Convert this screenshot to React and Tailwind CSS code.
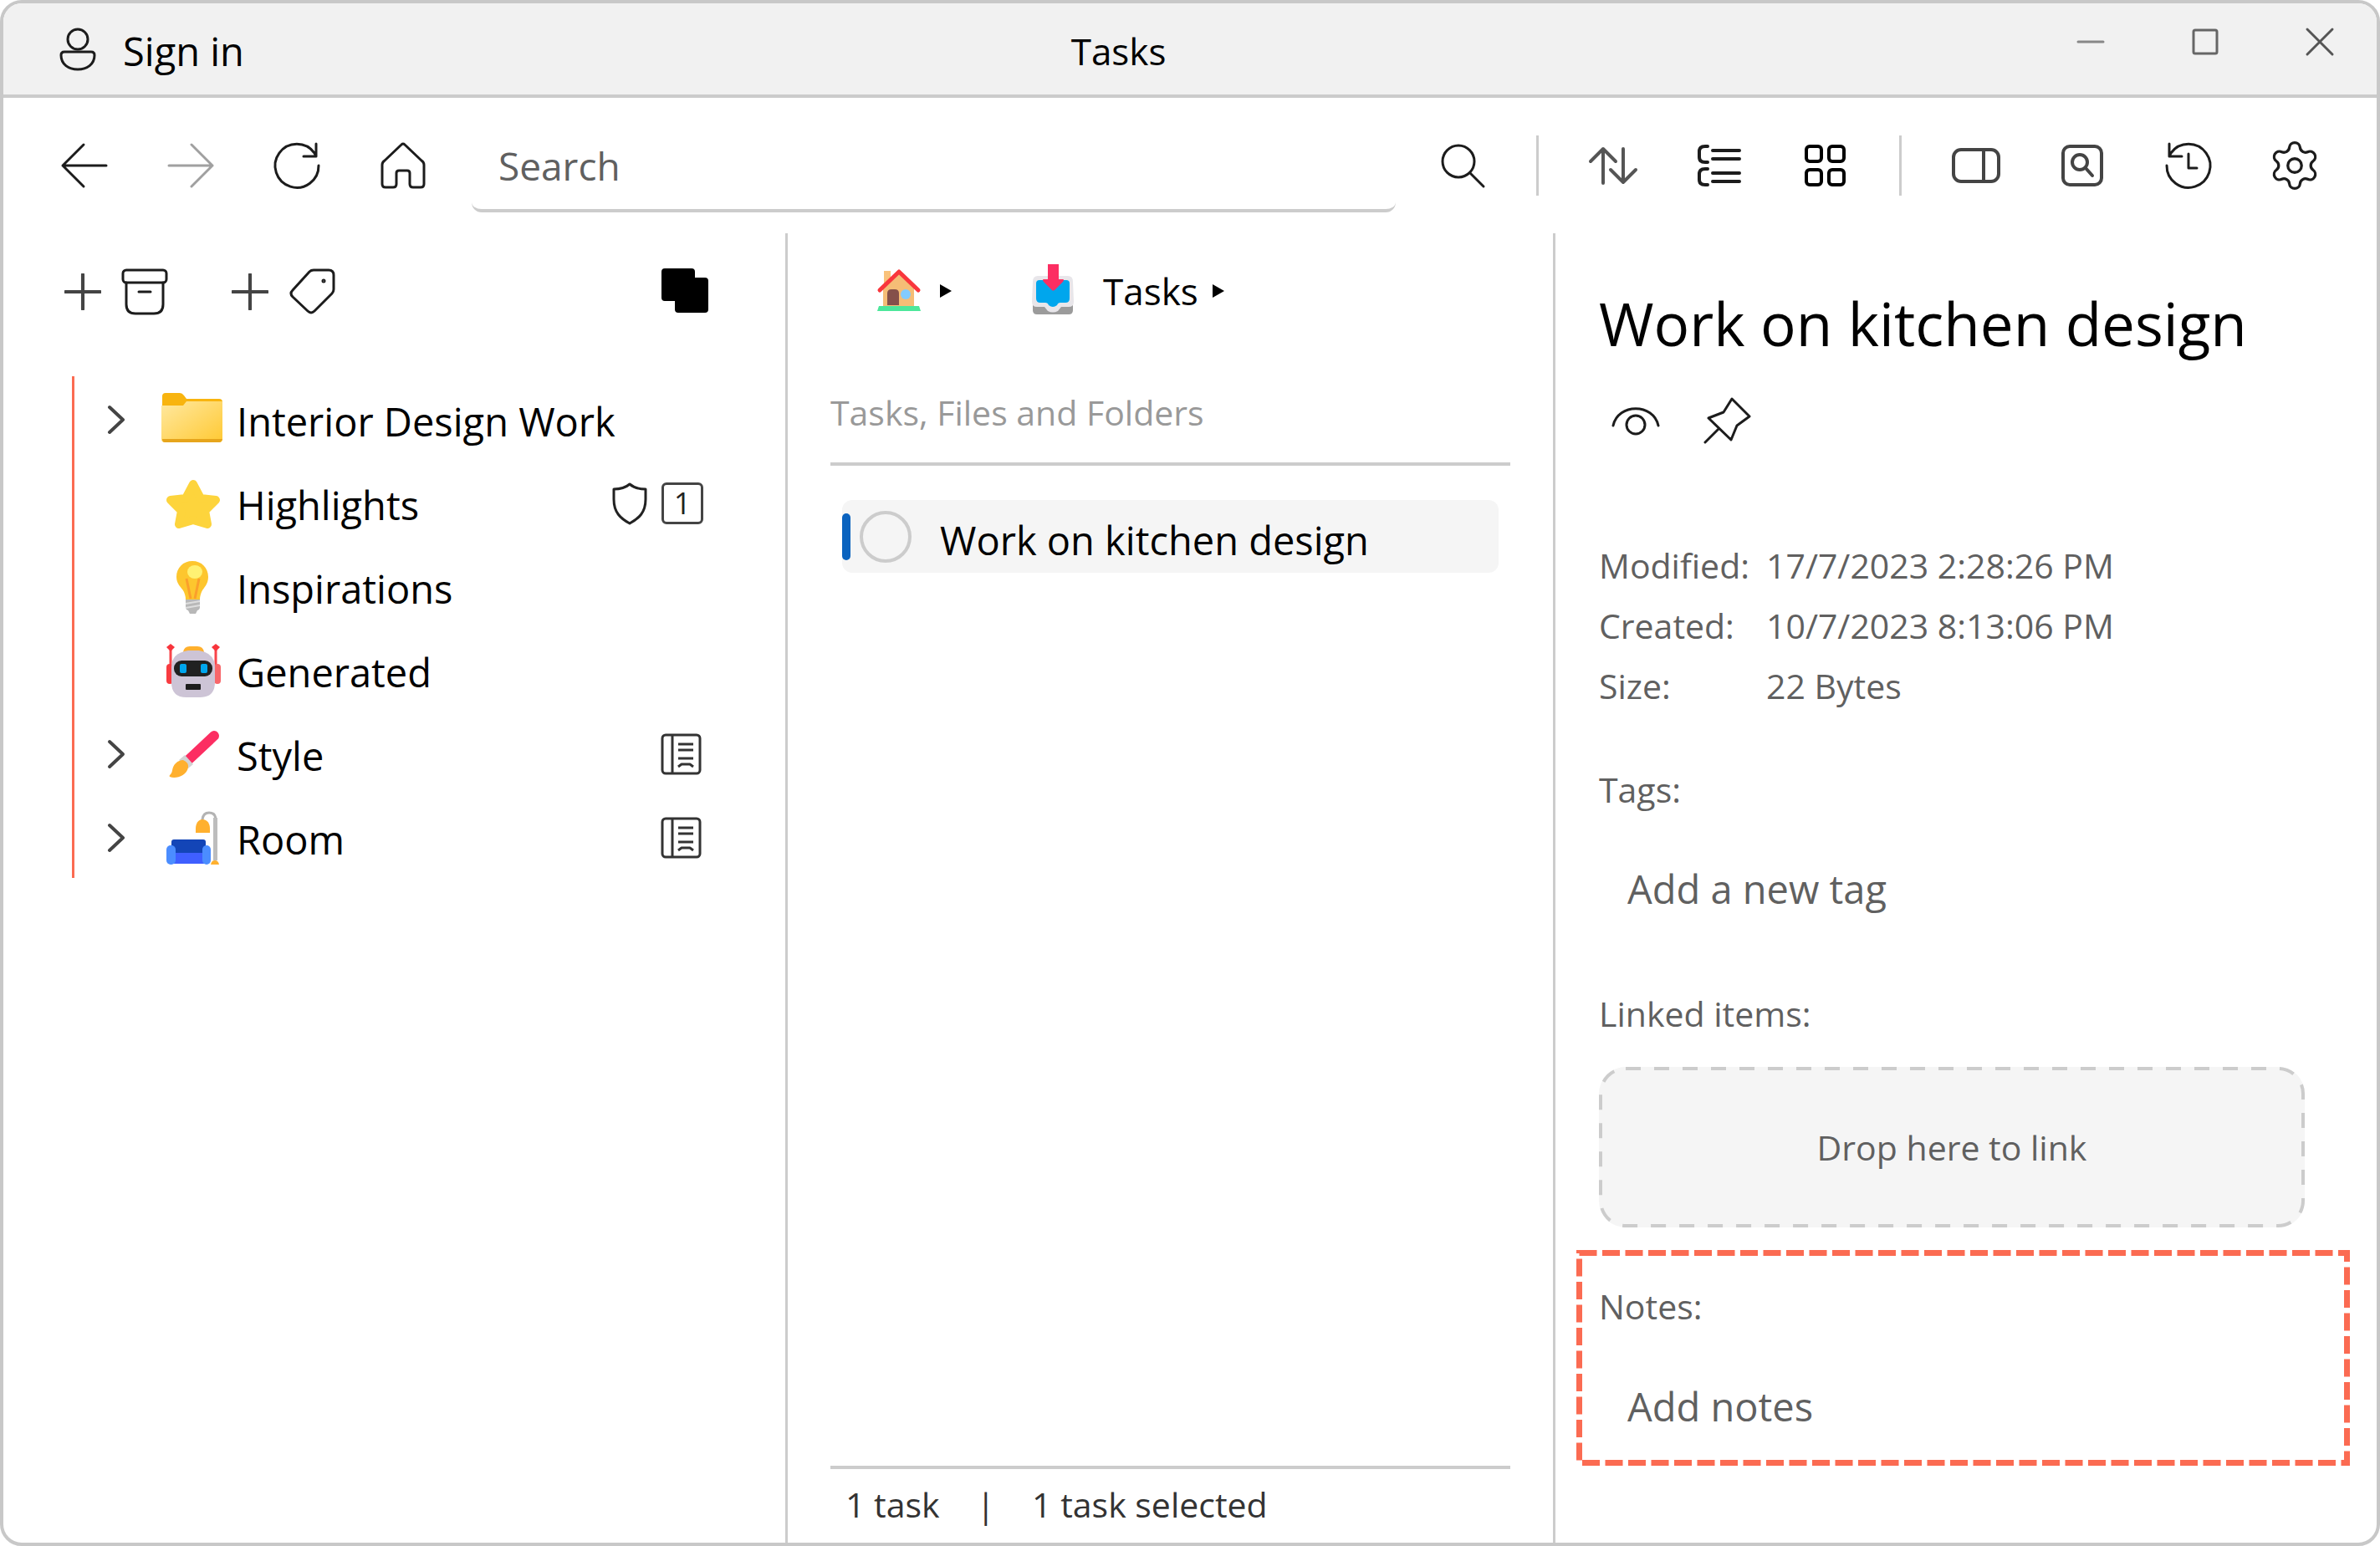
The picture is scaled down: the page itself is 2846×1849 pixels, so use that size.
import React from "react";
import { Settings } from "lucide-react";

function Icon({ children, className = "size-16", width = 3, color = "#1c1c1c" }) {
  return (
    <svg
      viewBox="0 0 64 64"
      className={`shrink-0 ${className}`}
      fill="none"
      stroke={color}
      strokeWidth={width}
      strokeLinecap="round"
      strokeLinejoin="round"
      aria-hidden="true"
    >
      {children}
    </svg>
  );
}

function ToolButton({ label, children, disabled }) {
  return (
    <button type="button" aria-label={label} disabled={disabled} className="flex h-20 w-[127px] shrink-0 items-center justify-center">
      {children}
    </button>
  );
}

function Divider() {
  return <div className="mx-[25px] h-[72px] w-[3px] shrink-0 bg-[#cccccc]" />;
}

function Triangle() {
  return (
    <svg viewBox="0 0 16 18" className="h-[18px] w-4 shrink-0" aria-hidden="true">
      <path d="M1 1L15 9L1 17Z" fill="#000" />
    </svg>
  );
}

function Chevron() {
  return (
    <svg viewBox="0 0 36 40" className="h-10 w-9" fill="none" stroke="#444" strokeWidth="4" strokeLinecap="round" strokeLinejoin="round" aria-hidden="true">
      <path d="M10 7L26 22L10 37" />
    </svg>
  );
}

function Emoji({ children }) {
  return (
    <svg viewBox="0 0 80 80" className="size-20 shrink-0" aria-hidden="true">
      {children}
    </svg>
  );
}

function FolderPic() {
  return (
    <Emoji>
      <defs>
        <linearGradient id="folder" x1="0" y1="0" x2="1" y2="1">
          <stop offset="0" stopColor="#ffe8a0" />
          <stop offset="1" stopColor="#ffc933" />
        </linearGradient>
      </defs>
      <path d="M3 14q0-4 4-4h17q3 0 5 3l3 4h39q4 0 4 4v10H3z" fill="#f8b40f" />
      <path d="M2 25h26l4-5h43v45q0 4-4 4H6q-4 0-4-4z" fill="url(#folder)" />
      <path d="M3 65h72q-1 4-4 4H6q-3 0-3-4z" fill="#e6a51c" />
    </Emoji>
  );
}

function StarPic() {
  return (
    <Emoji>
      <path
        d="M40 19L49 36L67 38L54 51L57 67L40 62L23 67L26 51L13 38L31 36Z"
        fill="#fdd43c"
        stroke="#fdd43c"
        strokeWidth="10"
        strokeLinejoin="round"
      />
    </Emoji>
  );
}

function BulbPic() {
  return (
    <Emoji>
      <path d="M39 11c11 0 19 8 19 19 0 9-5 12-8 18-1 3-2 5-2 9H31c0-4-1-6-2-9-3-6-9-9-9-18 0-11 8-19 19-19z" fill="#fdc62e" />
      <path d="M32 32l5 24M47 32l-5 24" stroke="#fb9f2c" strokeWidth="3" fill="none" />
      <ellipse cx="42" cy="24" rx="9" ry="8" fill="#fff173" />
      <path d="M31 57h17v9q0 3-3 4l-2 4h-7l-2-4q-3-1-3-4z" fill="#b8b8b8" />
      <path d="M31 62l17-3M31 67l17-3" stroke="#dedede" strokeWidth="2" />
    </Emoji>
  );
}

function RobotPic() {
  return (
    <Emoji>
      <path d="M13 15v30M67 15v30" stroke="#f8454b" strokeWidth="3" />
      <path d="M13 10l5 4-5 5-5-5zM67 10l5 4-5 5-5-5z" fill="#f8353c" />
      <rect x="8" y="34" width="8" height="24" rx="4" fill="#f83b40" />
      <rect x="65" y="34" width="8" height="24" rx="4" fill="#f8666a" />
      <path d="M28 20q1-7 8-7h9q7 0 8 7z" fill="#ffb02e" />
      <path d="M34 18h13q19 3 19 20v18q0 18-18 18H32q-18 0-18-18V38q0-17 20-20z" fill="#cdc4d6" />
      <rect x="17" y="30" width="46" height="19" rx="9" fill="#212121" />
      <rect x="24" y="34" width="8" height="11" rx="2" fill="#00a6ed" />
      <rect x="49" y="34" width="8" height="11" rx="2" fill="#00a6ed" />
      <rect x="31" y="58" width="18" height="7" rx="1" fill="#1c1c1c" />
    </Emoji>
  );
}

function BrushPic() {
  return (
    <Emoji>
      <path d="M32 51L65 20" stroke="#fc2e62" strokeWidth="12" strokeLinecap="round" />
      <path d="M30 43l10 11-6 5-11-10z" fill="#d3d3d3" />
      <path d="M28 49q7 3 6 9c-2 10-15 14-22 11-1-1 0-2 1-3 3-3 1-8 6-13 3-3 6-4 9-4z" fill="#ffb02e" />
    </Emoji>
  );
}

function SofaPic() {
  return (
    <Emoji>
      <path d="M51 22V20q1-8 8-8 8 0 8 9" fill="none" stroke="#b3b3b3" strokeWidth="3" />
      <path d="M64 18h5v51h-5z" fill="#bdbdbd" />
      <path d="M51 20c6 0 9 5 9 11v5H43v-5c0-6 3-11 8-11z" fill="#ffb02e" />
      <rect x="14" y="44" width="41" height="22" rx="3" fill="#1345b7" />
      <rect x="12" y="60" width="45" height="13" fill="#3f5fff" />
      <rect x="8" y="51" width="11" height="23" rx="5" fill="#4b8dff" />
      <rect x="51" y="51" width="10" height="23" rx="5" fill="#4b8dff" />
      <path d="M61 74q1-5 5-5t5 5z" fill="#ffb02e" />
    </Emoji>
  );
}

function HousePic() {
  return (
    <svg viewBox="0 0 64 64" className="size-16 shrink-0" aria-hidden="true">
      <path d="M14 8h8v15h-8z" fill="#f9c27b" />
      <path d="M32 10L50 28v22H13V28z" fill="#f5bd76" />
      <path d="M9 31L32 9L55 31" fill="none" stroke="#f9363c" strokeWidth="5" strokeLinecap="round" strokeLinejoin="round" />
      <path d="M18 49V35q0-5 5-5h4q5 0 5 5v14z" fill="#85504a" />
      <circle cx="40" cy="36" r="6" fill="#83cbff" />
      <path d="M8 50h48l2 6H6z" fill="#4ce79a" />
    </svg>
  );
}

function InboxPic() {
  return (
    <svg viewBox="0 0 64 64" className="size-16 shrink-0" aria-hidden="true">
      <path d="M8 36h48v19q0 5-5 5H13q-5 0-5-5z" fill="#9b9b9b" />
      <path d="M14 14h36q6 0 6 7l1 24q0 6-6 6H42l-4 5q-6 3-12 0l-4-5H13q-6 0-6-6l1-24q0-7 6-7z" fill="#e8e6ea" />
      <path d="M16 19h32q4 0 4 4v18q0 5-5 5h-6q-3 0-4 3-5 4-10 0-1-3-4-3h-6q-5 0-5-5V23q0-4 4-4z" fill="#00a6ed" />
      <path d="M26 0h13v18h5q2 0 0 3L34 31q-2 1-3 0L21 21q-2-3 0-3h5z" fill="#fc2e62" />
    </svg>
  );
}

function BookIcon() {
  return (
    <svg viewBox="0 0 52 52" className="size-[52px]" fill="none" stroke="#333" strokeWidth="3" strokeLinejoin="round" aria-hidden="true">
      <rect x="3" y="3" width="45" height="46" rx="4" />
      <path d="M15 3v46M22 14h18M22 21h18M22 31h18M22 41l4-3h10l4 3" />
    </svg>
  );
}

const tree = [
  { label: "Interior Design Work", pic: FolderPic, expandable: true },
  { label: "Highlights", pic: StarPic, badge: "priority" },
  { label: "Inspirations", pic: BulbPic },
  { label: "Generated", pic: RobotPic },
  { label: "Style", pic: BrushPic, expandable: true, badge: "book" },
  { label: "Room", pic: SofaPic, expandable: true, badge: "book" },
];

function TreeRow({ item }) {
  const Pic = item.pic;
  return (
    <li className="flex h-[100px] items-center pl-8 pr-[98px]">
      <div className="flex w-9 shrink-0">
        {item.expandable && (
          <button type="button" aria-label={`Expand ${item.label}`}>
            <Chevron />
          </button>
        )}
      </div>
      <a href="#" className="ml-[34px] flex min-w-0 items-center gap-3">
        <Pic />
        <span className="truncate pt-2 leading-[70px]">{item.label}</span>
      </a>
      {item.badge === "priority" && (
        <div className="ml-auto flex items-center gap-3 pt-1">
          <svg viewBox="0 0 52 52" className="size-[52px]" fill="none" stroke="#222" strokeWidth="3" strokeLinejoin="round" aria-hidden="true">
            <path d="M26 3q7 6 19 6v12c0 16-8 23-19 29C15 44 7 37 7 21V9q12 0 19-6z" />
          </svg>
          <span className="flex size-[50px] items-center justify-center rounded-md border-3 border-[#444] text-[36px] leading-10 text-[#222]">1</span>
        </div>
      )}
      {item.badge === "book" && (
        <div className="ml-auto pt-1">
          <BookIcon />
        </div>
      )}
    </li>
  );
}

export default function App() {
  return (
    <div className="min-h-screen bg-white">
      <div className="flex min-h-screen flex-col overflow-hidden rounded-[26px] border-4 border-[#c8c8c8] bg-white font-['Open_Sans','Noto_Sans',sans-serif] text-[47px] text-black">
        <header className="grid h-[113px] grid-cols-[minmax(0,1277fr)_auto_minmax(0,1448fr)] items-center border-b-4 border-[#cbcbcb] bg-[#f1f1f1]">
          <button type="button" className="flex items-center gap-[22px] justify-self-start pl-[57px]">
            <Icon>
              <circle cx="32" cy="20" r="12" />
              <path d="M16 35h32q4 0 4 4c0 11-9 17-20 17S12 50 12 39q0-4 4-4z" />
            </Icon>
            <span className="pt-1 leading-[70px]">Sign in</span>
          </button>
          <h1 className="pt-1 text-[44px] leading-[70px]">Tasks</h1>
          <div className="flex h-[92px] items-center self-start justify-self-end">
            <button type="button" aria-label="Minimize" className="flex w-[137px] justify-center">
              <Icon color="#888"><path d="M17 32h30" /></Icon>
            </button>
            <button type="button" aria-label="Maximize" className="flex w-[137px] justify-center">
              <Icon color="#666"><rect x="18" y="18" width="28" height="28" rx="2" /></Icon>
            </button>
            <button type="button" aria-label="Close" className="flex w-[137px] justify-center">
              <Icon color="#555"><path d="M17 17L47 47M47 17L17 47" /></Icon>
            </button>
          </div>
        </header>

        <div className="flex h-[162px] items-center pl-[33px] pr-[35px]">
          <ToolButton label="Back">
            <Icon><path d="M58 32H6M31 7L6 32L31 57" /></Icon>
          </ToolButton>
          <ToolButton label="Forward" disabled>
            <Icon color="#a0a0a0"><path d="M6 32H58M33 7L58 32L33 57" /></Icon>
          </ToolButton>
          <ToolButton label="Refresh">
            <Icon><path d="M58 32A26 26 0 1 1 53 17L55 21M55 6V21H40" /></Icon>
          </ToolButton>
          <ToolButton label="Home">
            <Icon><path d="M30 7q2-2 4 0L54 26q3 2 3 5V54q0 4-4 4H44q-4 0-4-4V41q0-3-3-3H27q-3 0-3 3V54q0 4-4 4H11q-4 0-4-4V31q0-3 3-5z" /></Icon>
          </ToolButton>
          <input
            type="text"
            aria-label="Search"
            placeholder="Search"
            className="ml-[19px] mr-4 h-[112px] min-w-0 flex-1 rounded-b-xl border-b-4 border-[#cccccc] bg-transparent pl-8 pt-1 text-[46px] outline-none placeholder:text-[#606060]"
          />
          <ToolButton label="Run search">
            <Icon><circle cx="27" cy="27" r="19" /><path d="M41 41L57 57" /></Icon>
          </ToolButton>
          <Divider />
          <ToolButton label="Sort">
            <Icon width={4} color="#555"><path d="M20 53V12M5 27L20 12L35 27M44 12V52M29 37L44 52L59 37" /></Icon>
          </ToolButton>
          <ToolButton label="List view">
            <Icon width={4}><path d="M18 9h-3q-7 0-7 6v7q0 6 7 6h3M18 36h-3q-7 0-7 6v7q0 6 7 6h3M24 14h32M24 24h32M24 41h32M24 51h32" /></Icon>
          </ToolButton>
          <ToolButton label="Grid view">
            <Icon width={4} color="#000">
              <rect x="9" y="9" width="18" height="18" rx="4" />
              <rect x="36" y="9" width="18" height="18" rx="4" />
              <rect x="9" y="37" width="18" height="18" rx="4" />
              <rect x="36" y="37" width="18" height="18" rx="4" />
            </Icon>
          </ToolButton>
          <Divider />
          <ToolButton label="Side panel">
            <Icon width={4} color="#444"><rect x="5" y="13" width="54" height="38" rx="9" /><path d="M41 13v38" /></Icon>
          </ToolButton>
          <ToolButton label="Search in file">
            <Icon width={4} color="#444"><rect x="9" y="9" width="46" height="46" rx="8" /><circle cx="29" cy="28" r="9" /><path d="M36 35L44 44" /></Icon>
          </ToolButton>
          <ToolButton label="History">
            <Icon><path d="M6 32A26 26 0 1 0 11 17L9 21M9 6V21H24M32 18v17h10" /></Icon>
          </ToolButton>
          <ToolButton label="Settings">
            <Settings className="size-[66px] text-[#1c1c1c]" strokeWidth={1.2} aria-hidden="true" />
          </ToolButton>
        </div>

        <div className="grid flex-1 grid-cols-[minmax(0,935fr)_minmax(0,921fr)_minmax(0,982fr)]">
          <nav aria-label="Folders">
            <div className="flex h-[140px] items-center pl-[73px] pr-[87px]">
              <button type="button" aria-label="Add archive" className="flex items-center">
                <Icon className="size-11" width={6} color="#444"><path d="M32 2v60M2 32h60" /></Icon>
                <Icon className="ml-5 size-16">
                  <rect x="6" y="6" width="52" height="15" rx="4" />
                  <path d="M10 21v26q0 11 11 11h22q11 0 11-11V21M25 32h14" />
                </Icon>
              </button>
              <button type="button" aria-label="Add tag" className="ml-[72px] flex items-center">
                <Icon className="size-11" width={6} color="#444"><path d="M32 2v60M2 32h60" /></Icon>
                <Icon className="ml-5 size-16">
                  <path d="M34 6h18q6 0 6 6v17q0 3-2 5L35 55q-4 4-8 0L9 38q-4-4 0-8L29 8q2-2 5-2z" />
                  <circle cx="46" cy="19" r="1" />
                </Icon>
              </button>
              <button type="button" aria-label="Copy" className="ml-auto">
                <Icon color="#000">
                  <path d="M7 4h32q4 0 4 4v7h12q4 0 4 4v34q0 4-4 4H23q-4 0-4-4V43H7q-4 0-4-4V8q0-4 4-4z" fill="#000" stroke="none" />
                </Icon>
              </button>
            </div>
            <ul className="ml-[82px] mt-[31px] border-l-3 border-[#fb6b52]">
              {tree.map((item) => (
                <TreeRow key={item.label} item={item} />
              ))}
            </ul>
          </nav>

          <main className="flex flex-col border-x-3 border-[#cccccc] px-[51px]">
            <div className="flex h-[138px] items-center pl-[50px]">
              <a href="#" aria-label="Home" className="flex items-center gap-4">
                <HousePic />
                <Triangle />
              </a>
              <a href="#" className="ml-[88px] flex items-center">
                <InboxPic />
                <span className="ml-7 text-[44px] leading-[70px]">Tasks</span>
                <span className="ml-4 flex"><Triangle /></span>
              </a>
            </div>
            <h2 className="mt-[46px] border-b-4 border-[#cccccc] pb-[30px] text-[41px] leading-[60px] text-[#999]">Tasks, Files and Folders</h2>
            <ul className="mx-[14px] mt-[41px]">
              <li>
                <label className="flex h-[87px] items-center rounded-xl bg-[#f5f5f5]">
                  <span className="h-14 w-2.5 rounded-full bg-[#0a63bf]" />
                  <input type="checkbox" className="ml-[11px] size-[62px] shrink-0 appearance-none rounded-full border-4 border-[#cccccc]" />
                  <span className="ml-[34px] truncate pt-2 leading-[70px]">Work on kitchen design</span>
                </label>
              </li>
            </ul>
            <footer className="mt-auto flex h-[92px] items-center border-t-4 border-[#cccccc] pb-1 pl-[18px] text-[41px] leading-[60px] text-[#333]">
              <span>1 task</span>
              <span className="mx-11">|</span>
              <span>1 task selected</span>
            </footer>
          </main>

          <aside className="pl-[52px] pr-[86px] pt-[60px] text-[41px] leading-[60px] text-[#606060]">
            <h2 className="text-[71px] leading-[96px] text-black">Work on kitchen design</h2>
            <div className="mt-9 flex items-center gap-[46px] pl-3">
              <button type="button" aria-label="Preview">
                <Icon><path d="M5 38C11 11 53 11 59 38" /><circle cx="32" cy="37" r="11" /></Icon>
              </button>
              <button type="button" aria-label="Pin">
                <Icon><path d="M37 6L58 27L43 38L36 55L9 29L27 22ZM21 42L5 58" /></Icon>
              </button>
            </div>
            <dl className="mt-[105px] grid grid-cols-[200px_minmax(0,1fr)] leading-[72px]">
              <dt>Modified:</dt>
              <dd>17/7/2023 2:28:26 PM</dd>
              <dt>Created:</dt>
              <dd>10/7/2023 8:13:06 PM</dd>
              <dt>Size:</dt>
              <dd>22 Bytes</dd>
            </dl>
            <label htmlFor="tag" className="mt-[58px] block">Tags:</label>
            <input id="tag" placeholder="Add a new tag" className="mt-[45px] block h-[88px] w-full bg-transparent pl-[34px] text-[47px] outline-none placeholder:text-[#606060]" />
            <h3 className="mt-[75px]">Linked items:</h3>
            <div className="relative mt-[34px] flex h-[192px] items-center justify-center rounded-[32px] bg-[#f5f5f5]">
              <svg className="absolute inset-0 size-full" fill="none" stroke="#cccccc" strokeWidth="4" strokeDasharray="18 16" aria-hidden="true">
                <rect x="2" y="2" rx="30" className="h-[calc(100%-4px)] w-[calc(100%-4px)]" />
              </svg>
              <span>Drop here to link</span>
            </div>
            <section className="relative -ml-[27px] -mr-[54px] mt-[27px] px-[27px] pb-[27px] pt-[37px]">
              <svg className="pointer-events-none absolute inset-0 size-full" fill="none" stroke="#fb6b52" strokeWidth="7" strokeDasharray="21 6.5" aria-hidden="true">
                <rect x="3.5" y="3.5" className="h-[calc(100%-7px)] w-[calc(100%-7px)]" />
              </svg>
              <label htmlFor="notes" className="block">Notes:</label>
              <input id="notes" placeholder="Add notes" className="mt-[46px] block h-[88px] w-full bg-transparent pl-[34px] text-[47px] outline-none placeholder:text-[#606060]" />
            </section>
          </aside>
        </div>
      </div>
    </div>
  );
}
